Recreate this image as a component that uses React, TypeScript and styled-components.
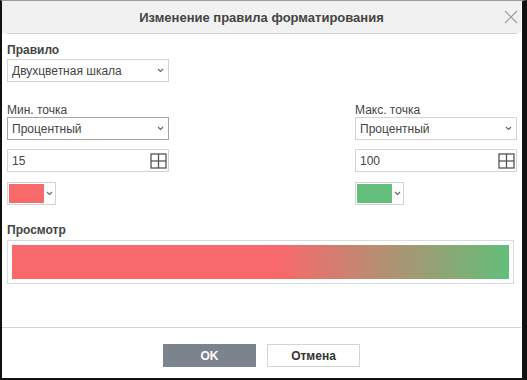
import React from "react";
import styled, { createGlobalStyle } from "styled-components";

const Global = createGlobalStyle`
  html, body { margin: 0; padding: 0; background: #fff; }
  body { font-family: Arial, "Liberation Sans", sans-serif; color: #444; }
  * { box-sizing: border-box; }
`;

const Frame = styled.div`
  width: 527px;
  height: 380px;
  border-top: 1px solid #9a9a9a;
  border-left: 2px solid #111;
  border-right: 5px solid #111;
  border-bottom: 2px solid #111;
  display: flex;
  flex-direction: column;
  background: #fff;
`;

const Header = styled.div`
  height: 32px;
  background: #f1f1f1;
  display: grid;
  grid-template-columns: 1fr auto 1fr;
  align-items: center;
  margin-right: 1px;
`;

const Title = styled.div`
  grid-column: 2;
  font-size: 13px;
  font-weight: bold;
  color: #444;
`;

const Close = styled.button`
  grid-column: 3;
  justify-self: end;
  margin-right: 3px;
  width: 14px;
  height: 14px;
  padding: 0;
  border: none;
  background: transparent;
  display: flex;
`;

const HeaderRule = styled.div`
  height: 1px;
  background: #cfcfcf;
  margin: 0 5px 0 5px;
`;

const Body = styled.div`
  flex: 1;
  padding: 9px 5px 0 5px;
  display: flex;
  flex-direction: column;
`;

const Label = styled.div<{ $bold?: boolean; $gap?: number; $top?: number }>`
  font-size: 12px;
  line-height: 14px;
  font-weight: ${(p) => (p.$bold ? "bold" : "normal")};
  color: #444;
  margin-top: ${(p) => p.$top ?? 0}px;
  margin-bottom: ${(p) => p.$gap ?? 0}px;
`;

const Select = styled.div<{ $focus?: boolean }>`
  width: 162px;
  height: 23px;
  border: 1px solid ${(p) => (p.$focus ? "#a6a6a6" : "#d4d4d4")};
  display: flex;
  align-items: center;
  justify-content: space-between;
  padding: 0 4px 0 4px;
  font-size: 12px;
  color: #444;
  background: #fff;
`;

const Input = styled.div`
  width: 162px;
  height: 23px;
  border: 1px solid #d4d4d4;
  display: flex;
  align-items: center;
  justify-content: space-between;
  padding: 0 1px 0 4px;
  font-size: 12px;
  color: #444;
  margin-top: 9px;
`;

const Row = styled.div`
  display: flex;
  justify-content: space-between;
  margin-top: 21px;
`;

const Column = styled.div`
  display: flex;
  flex-direction: column;
`;

const ColorButton = styled.div`
  margin-top: 10px;
  width: 49px;
  height: 23px;
  border: 1px solid #d4d4d4;
  padding: 1px;
  display: flex;
  align-items: center;
`;

const Swatch = styled.div<{ $color: string }>`
  width: 35px;
  height: 19px;
  background: ${(p) => p.$color};
`;

const ChevronCell = styled.div`
  flex: 1;
  display: flex;
  justify-content: center;
  align-items: center;
`;

const PreviewBox = styled.div`
  margin-top: 3px;
  width: 507px;
  height: 44px;
  border: 1px solid #d6dcdb;
  padding: 4px;
`;

const Gradient = styled.div`
  height: 100%;
  background: linear-gradient(to right, #f8696b 0%, #f8696b 54%, #63be7b 100%);
`;

const Footer = styled.div`
  border-top: 1px solid #d4d4d4;
  height: 51px;
  padding-top: 16px;
  display: flex;
  justify-content: center;
  gap: 11px;
  margin-right: 1px;
`;

const Button = styled.button<{ $primary?: boolean }>`
  width: 93px;
  height: 23px;
  font-family: Arial, "Liberation Sans", sans-serif;
  font-size: 12px;
  font-weight: bold;
  color: ${(p) => (p.$primary ? "#fff" : "#333")};
  background: ${(p) => (p.$primary ? "#7b848c" : "#fff")};
  border: 1px solid ${(p) => (p.$primary ? "#7b848c" : "#d4d4d4")};
  padding: 0;
`;

const Chevron = () => (
  <svg width="7" height="5" viewBox="0 0 7 5">
    <path d="M1 1 L3.5 3.5 L6 1" fill="none" stroke="#666" strokeWidth="1.2" />
  </svg>
);

const GridIcon = () => (
  <svg width="17" height="16" viewBox="0 0 17 16">
    <rect x="1" y="1" width="15" height="14" fill="none" stroke="#555" strokeWidth="1.3" />
    <line x1="8.5" y1="1" x2="8.5" y2="15" stroke="#555" strokeWidth="1.3" />
    <line x1="1" y1="8" x2="16" y2="8" stroke="#555" strokeWidth="1.3" />
  </svg>
);

const CloseIcon = () => (
  <svg width="14" height="14" viewBox="0 0 14 14">
    <path d="M1 1 L13 13 M13 1 L1 13" stroke="#999" strokeWidth="1.1" />
  </svg>
);

const PointColumn = ({ label, value, color, focus }: { label: string; value: string; color: string; focus?: boolean }) => (
  <Column>
    <Label>{label}</Label>
    <Select $focus={focus}>
      <span>Процентный</span>
      <Chevron />
    </Select>
    <Input>
      <span>{value}</span>
      <GridIcon />
    </Input>
    <ColorButton>
      <Swatch $color={color} />
      <ChevronCell>
        <Chevron />
      </ChevronCell>
    </ColorButton>
  </Column>
);

export default function App() {
  return (
    <>
      <Global />
      <Frame>
        <Header>
          <Title>Изменение правила форматирования</Title>
          <Close aria-label="close">
            <CloseIcon />
          </Close>
        </Header>
        <HeaderRule />
        <Body>
          <Label $bold $gap={2}>Правило</Label>
          <Select>
            <span>Двухцветная шкала</span>
            <Chevron />
          </Select>
          <Row>
            <PointColumn label="Мин. точка" value="15" color="#f8696b" focus />
            <PointColumn label="Макс. точка" value="100" color="#63be7b" />
          </Row>
          <Label $bold $top={18}>Просмотр</Label>
          <PreviewBox>
            <Gradient />
          </PreviewBox>
        </Body>
        <Footer>
          <Button $primary>OK</Button>
          <Button>Отмена</Button>
        </Footer>
      </Frame>
    </>
  );
}
